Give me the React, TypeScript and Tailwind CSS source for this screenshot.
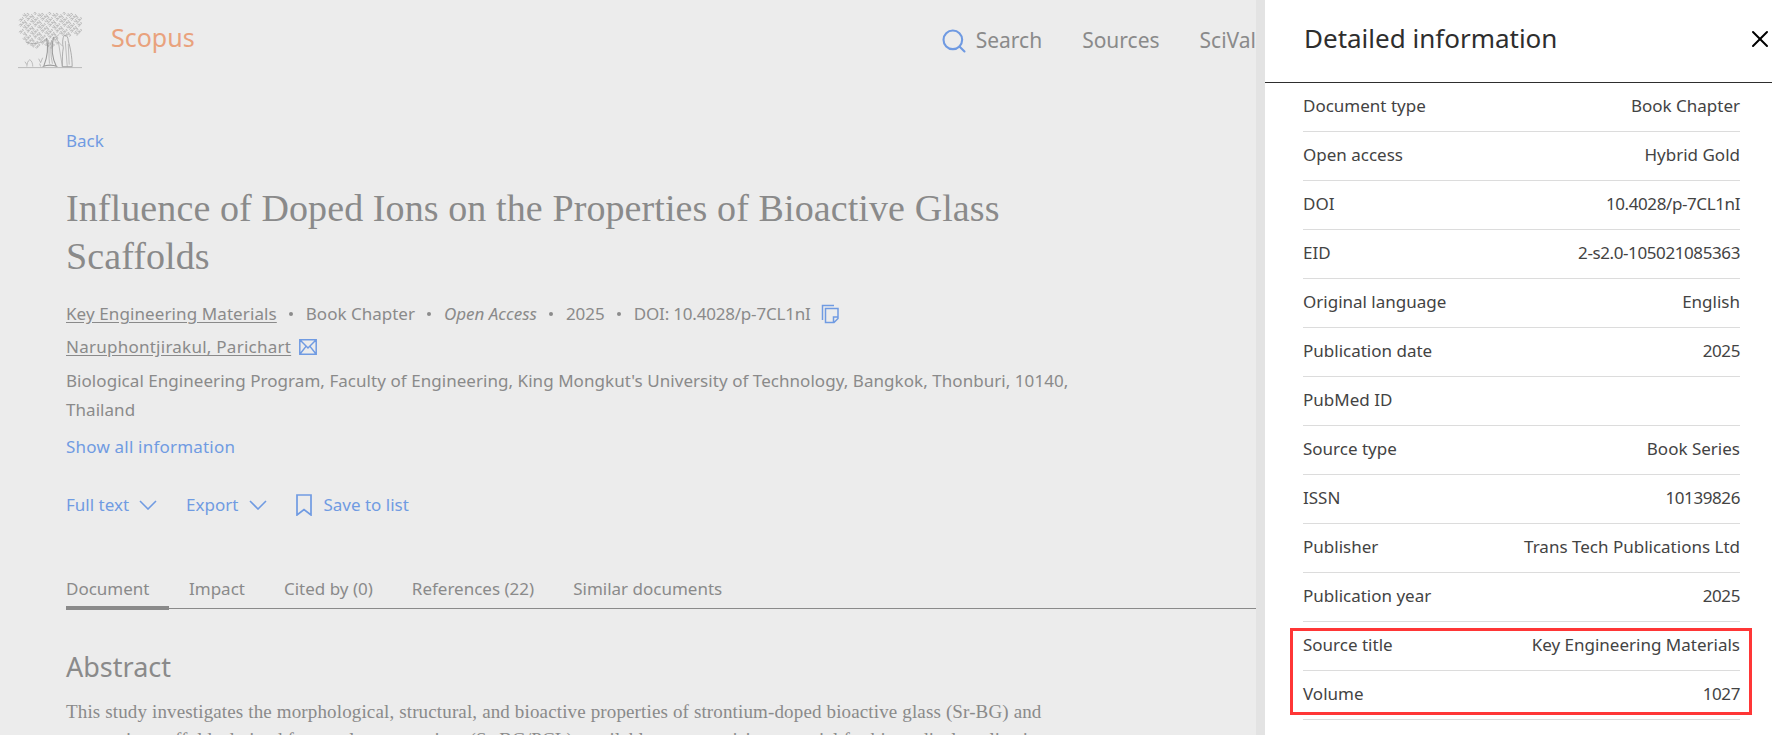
import { Search, X } from 'lucide-react';

const DETAILS = [
  ['Document type', 'Book Chapter'],
  ['Open access', 'Hybrid Gold'],
  ['DOI', '10.4028/p-7CL1nI'],
  ['EID', '2-s2.0-105021085363'],
  ['Original language', 'English'],
  ['Publication date', '2025'],
  ['PubMed ID', ''],
  ['Source type', 'Book Series'],
  ['ISSN', '10139826'],
  ['Publisher', 'Trans Tech Publications Ltd'],
  ['Publication year', '2025'],
];

const HIGHLIGHTED = [
  ['Source title', 'Key Engineering Materials'],
  ['Volume', '1027'],
];

const TABS = ['Impact', 'Cited by (0)', 'References (22)', 'Similar documents'];

// little curls that make up the tree's foliage
const curls: string[] = [];
for (let row = 0; row < 12; row++) {
  for (let col = 0; col < 17; col++) {
    const x = 1 + col * 3.7 + (row % 2) * 1.8;
    const y = 1 + row * 3 + ((col * 5 + row * 3) % 4) * 0.5;
    const rightSide = x > 38 && y > 23;
    const corner = (x < 3 || x > 60) && (y < 3 || y > 20);
    const lowLeft = x < 6 && y > 30;
    if (x < 63 && y < 35 && !rightSide && !corner && !lowLeft) {
      curls.push(
        (col + row) % 2 === 0
          ? `M${x} ${y}c.8-1.300 2.200-1.200 2.500 0c.2 1-1.200 1.500-1.700.6`
          : `M${x} ${y + 1}c.8.9 2 .9 2.600-.2c.3-.9-.8-1.400-1.400-.7`,
      );
    }
  }
}

const ElsevierTree = () => (
  <svg viewBox="0 0 65 57" className="h-[57px] w-[65px]" fill="none" stroke="#9a9a9a" strokeWidth="0.6">
    <path d={curls.join('')} />
    <path d="M29 26c2 9 1 19-3 29M36 25c-2 9-2 20 3 30M25 55c5-2 10-2 15 0" strokeWidth="1.100" />
    <path d="M31 30c1 8 0 15 1 22M34 28c-1 8-1 16 1 24M8 30c7 3 14 2 21-3M36 26c3-1 4-2 6-4" />
    <path d="M47 23c3 0 4 3 4 6c2 6 4 16 4 26h-10c0-8 0-14 1-19c-1-4-1-10 1-13z" strokeWidth="0.800" />
    <path d="M48 29l2 26M51 32l1 21M39 26c1 3 3 5 6 8M41 30l4 25" />
    <path d="M9 55c0-3 1-6 3-7c2 1 3 4 3 7M7 50l2 3M21 47l2 4l2-5M22 52l1 3" />
    <path d="M0 56h65" />
  </svg>
);

const CopyIcon = () => (
  <svg viewBox="0 0 18 20" className="h-5 w-[18px]" fill="none" stroke="#709be2" strokeWidth="1.500">
    <path d="M13 1.500H1.500V16" />
    <path d="M4.500 4.500h12.500v10l-4 4h-8.500zM17 13h-4.500v5" />
  </svg>
);

const MailIcon = () => (
  <svg viewBox="0 0 18 16" className="h-4 w-[18px]" fill="none" stroke="#709be2" strokeWidth="1.500">
    <path d="M.8.8h16.400v14.400H.8zM.8.8L9 9l8.200-8.200M.8 15.200l6-7.600M17.200 15.200l-6-7.600" />
  </svg>
);

const BookmarkIcon = () => (
  <svg viewBox="0 0 16 22" className="h-[22px] w-4" fill="none" stroke="#709be2" strokeWidth="1.700">
    <path d="M1 1h14v20l-7-5.500L1 21z" />
  </svg>
);

const Chevron = () => (
  <svg viewBox="0 0 18 10" className="h-[10px] w-[18px]" fill="none" stroke="#709be2" strokeWidth="1.600">
    <path d="M1 1l8 8l8-8" />
  </svg>
);

const Dot = () => <span className="mx-[12.5px] h-1 w-1 rounded-full bg-[#8c8c8c]" />;

const DetailRow = ({ label, value }: { label: string; value: string }) => (
  <div className="flex h-[49px] items-center justify-between border-b border-[#dcdcdc] pb-[2px] text-[17px] leading-6 text-[#434343]">
    <span>{label}</span>
    <span className={/^\d/.test(value) ? 'tracking-[-0.4px]' : ''}>{value}</span>
  </div>
);

const App = () => {
  return (
    <div className="relative flex h-[735px] w-[1772px] overflow-hidden bg-white font-['Noto_Sans',sans-serif]">
      <main className="w-[1256px] shrink-0 overflow-hidden bg-[#ececec] text-[#8a8a8a]">
        <header className="flex h-[82px] items-start pl-[18px] pt-[12px]">
          <ElsevierTree />
          <span className="ml-[29px] text-[25px] leading-[50px] text-[#e9a27d]">Scopus</span>
          <nav className="ml-[745px] flex h-[57px] items-center whitespace-nowrap text-[21px]">
            <Search className="mr-[8px] h-7 w-7 text-[#6f9ae2]" strokeWidth={1.8} />
            <span>Search</span>
            <span className="ml-[40px]">Sources</span>
            <span className="ml-[40px]">SciVal</span>
          </nav>
        </header>

        <div className="pl-[66px]">
          <a className="block pt-[47px] text-[17px] leading-6 text-[#709be2]">Back</a>
          <h1 className="mt-[31px] w-[1010px] font-['Liberation_Serif',serif] text-[38px] leading-[48px] tracking-[0.1px]">
            Influence of Doped Ions on the Properties of Bioactive Glass Scaffolds
          </h1>

          <div className="mt-[22px] flex h-6 items-center text-[17px]">
            <span className="underline underline-offset-2 tracking-[0.1px]">Key Engineering Materials</span>
            <Dot />
            <span>Book Chapter</span>
            <Dot />
            <span className="italic">Open Access</span>
            <Dot />
            <span>2025</span>
            <Dot />
            <span className="tracking-[-0.2px]">DOI: 10.4028/p-7CL1nI</span>
            <span className="ml-[10px]">
              <CopyIcon />
            </span>
          </div>
          <div className="mt-[9px] flex h-6 items-center gap-2 text-[17px]">
            <span className="underline underline-offset-2 tracking-[0.25px]">Naruphontjirakul, Parichart</span>
            <MailIcon />
          </div>
          <p className="mt-[7px] w-[1010px] text-[17px] leading-[29px] tracking-[0.05px]">
            Biological Engineering Program, Faculty of Engineering, King Mongkut's University of Technology, Bangkok, Thonburi, 10140, Thailand
          </p>
          <a className="mt-[11px] block text-[17px] leading-6 tracking-[0.2px] text-[#709be2]">Show all information</a>

          <div className="mt-[34px] flex h-6 items-center text-[17px] text-[#709be2]">
            <span>Full text</span>
            <span className="ml-[10px]">
              <Chevron />
            </span>
            <span className="ml-[29px]">Export</span>
            <span className="ml-[11px]">
              <Chevron />
            </span>
            <span className="ml-[29px]">
              <BookmarkIcon />
            </span>
            <span className="ml-[11px]">Save to list</span>
          </div>

          <div className="mt-[59px] flex h-[33px] border-b-[1.500px] border-[#8a8a8a] text-[17px]">
            <div className="-mb-[1.500px] w-[103px] border-b-[4px] border-[#8a8a8a]">Document</div>
            {TABS.map((tab, i) => (
              <div key={tab} className={i === 0 ? 'ml-[20px]' : 'ml-[39px]'}>
                {tab}
              </div>
            ))}
          </div>

          <h2 className="mt-[42px] text-[27px] leading-8">Abstract</h2>
          <p className="mt-[15px] w-[990px] font-['Liberation_Serif',serif] text-[19px] leading-[28px] tracking-[0.14px]">
            This study investigates the morphological, structural, and bioactive properties of strontium-doped bioactive glass (Sr-BG) and
            composite scaffolds derived from polymer matrices (Sr-BG/PCL), available as a promising material for biomedical applications in
          </p>
        </div>
      </main>

      <div className="w-[9px] shrink-0 bg-[#e3e3e3]" />

      <aside className="flex-1 bg-white">
        <div className="flex h-[83px] items-start justify-between border-b-[1.500px] border-[#2e2e2e] pl-[39px] pt-[20px]">
          <h2 className="text-[26px] leading-9 text-[#2e2e2e]">Detailed information</h2>
          <X className="-mr-[2px] mt-[5px] h-7 w-7 text-black" strokeWidth={1.7} />
        </div>
        <div className="pl-[38px] pr-[32px]">
          {DETAILS.map(([label, value]) => (
            <DetailRow key={label} label={label} value={value} />
          ))}
          <div className="relative">
            {HIGHLIGHTED.map(([label, value]) => (
              <DetailRow key={label} label={label} value={value} />
            ))}
            <div className="absolute -left-[13px] -right-[12px] top-[6px] h-[87px] border-[3px] border-[#ff3636]" />
          </div>
        </div>
      </aside>
    </div>
  );
};

export default App;
